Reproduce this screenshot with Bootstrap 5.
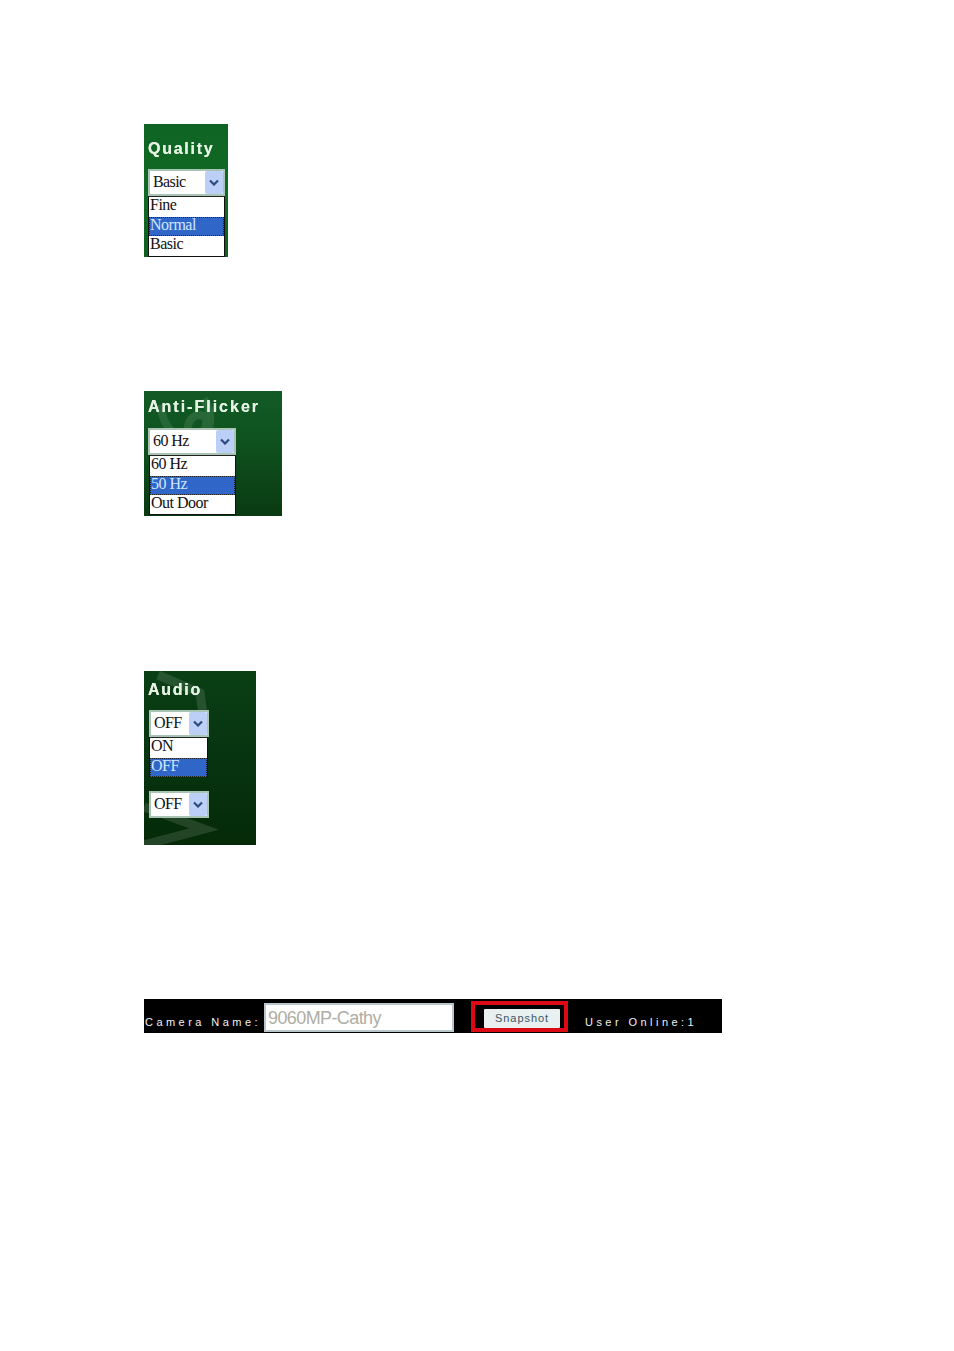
<!DOCTYPE html>
<html lang="en">
<head>
<meta charset="utf-8">
<title>Camera settings</title>
<link href="https://cdn.jsdelivr.net/npm/bootstrap@5.3.0/dist/css/bootstrap.min.css" rel="stylesheet">
<style>
body{background:#fff;margin:0}
.sheet{padding:124px 0 0 144px;height:1351px;overflow:hidden}
.shot{filter:blur(.4px)}
.panel{position:relative;overflow:hidden;padding-left:4px;color:#e6f3e4}
.panel>*{position:relative}
.panel>svg.wm{position:absolute;left:0;top:0}
.p-q{width:84px;height:133px;background:linear-gradient(#0f6423,#116a24 55%,#0f6020);margin-bottom:134px}
.p-a{width:138px;height:125px;background:linear-gradient(#125a26,#0f5420 35%,#0a3a12);margin-bottom:155px}
.p-u{width:112px;height:174px;background:linear-gradient(#0a3f14,#073410 50%,#052a08);margin-bottom:154px}
.ttl{font:700 16px/18px "Liberation Sans",sans-serif;letter-spacing:1.75px;white-space:nowrap;text-shadow:0 0 .6px #e6f3e4}
.p-q .ttl{padding-top:16px;height:45px}
.p-a .ttl{padding-top:7px;height:37px;letter-spacing:2px}
.p-u .ttl{padding-top:10px;height:39px}
.pick{height:27px;background:#fff;border:2px solid #a9c4b4;color:#111;font:16px/23px "Liberation Serif",serif;letter-spacing:-.6px;padding-left:3px}
.pick>span:first-child{margin-top:-2px}
.p-q .pick{width:77px}
.p-a .pick{width:88px}
.p-u .pick{width:60px;margin-left:1px}
.arrow{width:18px;height:23px;background:#bcd0f7;border-radius:2px;flex:none}
.opts{background:#fff;border:1px solid #111;border-top-color:#222;font:16px/16.5px "Liberation Serif",serif;letter-spacing:-.5px;color:#111}
.opts div{padding-left:1px;height:19.5px;white-space:nowrap}
.opts .on{background:#2f66c8;color:#cfe6ff;outline:1px dotted #222;outline-offset:-1px}
.p-q .opts{width:77px;height:61px}
.p-a .opts{width:87px;height:60px;margin-left:1px}
.p-u .opts{width:59px;height:40px;margin-left:1px;margin-bottom:14px}
.bar{width:578px;height:34px;background:#000;color:#f2f2f2;font:11px/14px "Liberation Sans",sans-serif;letter-spacing:3.45px;white-space:nowrap}
.cam{width:120px;padding:16px 0 0 1px}
.namebox{width:190px;height:29px;margin-top:4px;background:#fff;border:2px solid #b9c6cc;color:#aeaea4;font:18px/27px "Liberation Sans",sans-serif;letter-spacing:-.6px;padding-left:2px}
.redbox{width:97px;height:31px;margin:2px 0 0 17px;border:4px solid #dc0a14;padding:4px 0 0 9px}
.snap{width:76px;height:19px;background:#e8f0f0;color:#3d5566;font:11px/19px "Liberation Sans",sans-serif;letter-spacing:.95px;text-align:center;border-radius:1px}
.online{padding:16px 0 0 17px}
</style>
</head>
<body>
<main class="sheet">
<div class="shot">

<section class="panel p-q">
<div class="ttl">Quality</div>
<div class="pick d-flex justify-content-between align-items-center">
<span>Basic</span>
<span class="arrow d-flex align-items-center justify-content-center"><svg width="10" height="7" viewBox="0 0 10 7"><path d="M1 1.5 5 5.5 9 1.5" fill="none" stroke="#2c4a80" stroke-width="2.2"/></svg></span>
</div>
<div class="opts"><div>Fine</div><div class="on">Normal</div><div>Basic</div></div>
</section>

<section class="panel p-a">
<svg class="wm" width="138" height="125" viewBox="0 0 138 125"><path d="M16 14C20 40 36 50 44 44 42 30 50 20 62 26 64 42 54 52 44 50M60 8C68 20 68 34 62 44" fill="none" stroke="#fff" stroke-opacity=".1" stroke-width="8"/></svg>
<div class="ttl">Anti-Flicker</div>
<div class="pick d-flex justify-content-between align-items-center">
<span>60 Hz</span>
<span class="arrow d-flex align-items-center justify-content-center"><svg width="10" height="7" viewBox="0 0 10 7"><path d="M1 1.5 5 5.5 9 1.5" fill="none" stroke="#2c4a80" stroke-width="2.2"/></svg></span>
</div>
<div class="opts"><div>60 Hz</div><div class="on">50 Hz</div><div>Out Door</div></div>
</section>

<section class="panel p-u">
<svg class="wm" width="112" height="174" viewBox="0 0 112 174"><path d="M14 4 56 22 60 50 30 64M0 136 60 158 0 174" fill="none" stroke="#fff" stroke-opacity=".12" stroke-width="9"/></svg>
<div class="ttl">Audio</div>
<div class="pick d-flex justify-content-between align-items-center">
<span>OFF</span>
<span class="arrow d-flex align-items-center justify-content-center"><svg width="10" height="7" viewBox="0 0 10 7"><path d="M1 1.5 5 5.5 9 1.5" fill="none" stroke="#2c4a80" stroke-width="2.2"/></svg></span>
</div>
<div class="opts"><div>ON</div><div class="on">OFF</div></div>
<div class="pick d-flex justify-content-between align-items-center">
<span>OFF</span>
<span class="arrow d-flex align-items-center justify-content-center"><svg width="10" height="7" viewBox="0 0 10 7"><path d="M1 1.5 5 5.5 9 1.5" fill="none" stroke="#2c4a80" stroke-width="2.2"/></svg></span>
</div>
</section>

<section class="bar d-flex">
<div class="cam">Camera Name:</div>
<div class="namebox">9060MP-Cathy</div>
<div class="redbox"><div class="snap">Snapshot</div></div>
<div class="online">User Online:1</div>
</section>

</div>
</main>
<script src="https://cdn.jsdelivr.net/npm/bootstrap@5.3.0/dist/js/bootstrap.bundle.min.js"></script>
</body>
</html>
